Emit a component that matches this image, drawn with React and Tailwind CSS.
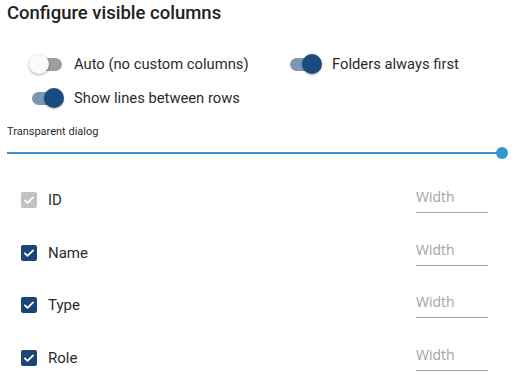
import React from 'react'

function Switch({ on }) {
  return (
    <div className="relative flex h-[20px] w-[35px] shrink-0 items-center">
      <div className={`ml-[3px] h-[13px] w-[30px] rounded-full ${on ? 'bg-[#7c96b6]' : 'bg-[#9e9e9e]'}`} />
      <div
        className={`absolute top-0 h-[20px] w-[20px] rounded-full ${
          on ? 'right-0 bg-[#1a4a7f] shadow-[0_1px_2px_rgba(0,0,0,0.3)]' : 'left-0 bg-[#fafafa] shadow-[0_1px_3px_rgba(0,0,0,0.35)]'
        }`}
      />
    </div>
  )
}

function Toggle({ on, label }) {
  return (
    <div className="flex h-[34px] items-center gap-[10px]">
      <Switch on={on} />
      <span className="text-[14.75px] text-[#2b2b2b]">{label}</span>
    </div>
  )
}

function Check({ disabled }) {
  return (
    <div className={`flex h-[16px] w-[16px] items-center justify-center rounded-[2px] ${disabled ? 'bg-[#c2c2c2]' : 'bg-[#1b4577]'}`}>
      <svg viewBox="0 0 24 24" className="h-[14px] w-[14px]" fill="none" stroke="white" strokeWidth="3" strokeLinecap="round" strokeLinejoin="round">
        <path d="M5 12.5l4.5 4.5L19 7.5" />
      </svg>
    </div>
  )
}

function ColumnRow({ label, disabled }) {
  return (
    <div className="flex h-[52.5px] items-center pl-[21px] pr-[30px]">
      <Check disabled={disabled} />
      <span className="ml-[11px] text-[15px] text-[#2b2b2b]">{label}</span>
      <div className="ml-auto flex w-[72px] flex-col border-b border-[#a8a8a8] pb-[5px]">
        <span className="font-['Open_Sans',sans-serif] text-[14px] leading-[20px] text-[#a3a3a3]">Width</span>
      </div>
    </div>
  )
}

export default function App() {
  const columns = [
    { label: 'ID', disabled: true },
    { label: 'Name' },
    { label: 'Type' },
    { label: 'Role' },
  ]

  return (
    <div className="h-[381px] w-[518px] overflow-hidden bg-white font-['Roboto',sans-serif]">
      <h2 className="pl-[7px] pt-[1px] text-[18.5px] font-medium leading-6 text-[#212121]">Configure visible columns</h2>

      <div className="mt-[22px] grid grid-cols-[258px_1fr] pl-[29px]">
        <Toggle on={false} label="Auto (no custom columns)" />
        <Toggle on label="Folders always first" />
        <Toggle on label="Show lines between rows" />
      </div>

      <div className="mt-[10px] pl-[7px] text-[11px] leading-[14px] text-[#2b2b2b]">Transparent dialog</div>
      <div className="flex h-[28px] items-center pl-[7px]">
        <div className="h-[2px] w-[495px] bg-[#3593d0]" />
        <div className="-ml-[6px] h-[12px] w-[12px] rounded-full bg-[#3593d0]" />
      </div>

      <div className="mt-[7px]">
        {columns.map((c) => (
          <ColumnRow key={c.label} label={c.label} disabled={c.disabled} />
        ))}
      </div>
    </div>
  )
}
